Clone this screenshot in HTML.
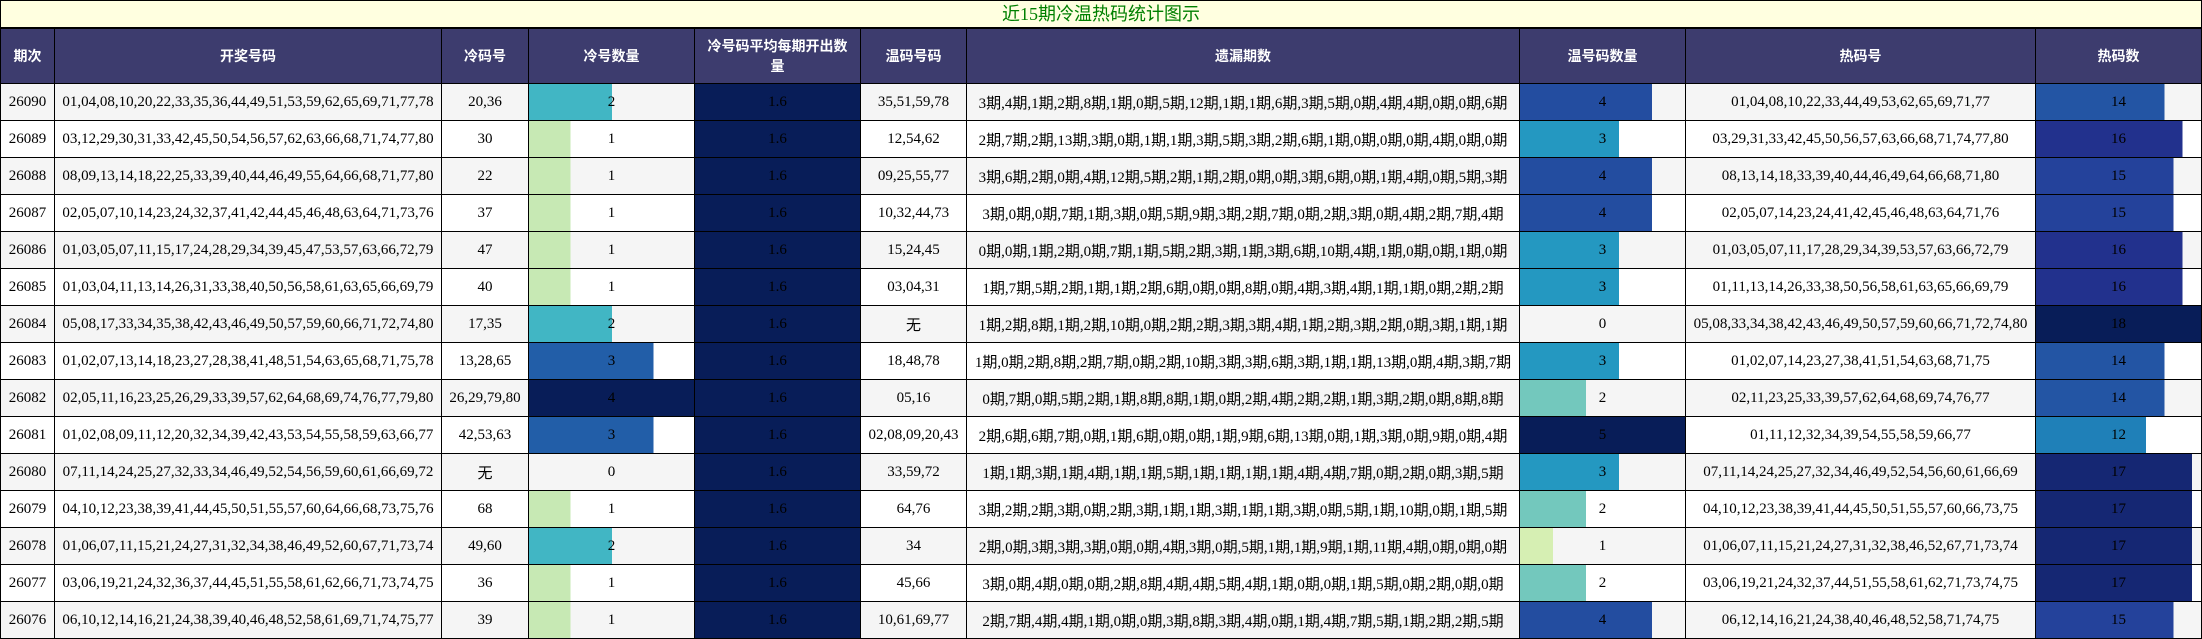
<!DOCTYPE html>
<html lang="zh">
<head>
<meta charset="utf-8">
<title>近15期冷温热码统计图示</title>
<style>
html,body{margin:0;padding:0;background:#fff;width:2202px;height:639px;overflow:hidden}
table{border-collapse:separate;border-spacing:0;table-layout:fixed;width:2202px;font-family:"Liberation Serif","Noto Sans CJK SC",serif;font-size:15px;color:#000;position:absolute;left:0;top:0}
td,th{box-sizing:border-box;border:0 solid #000;border-right-width:1px;border-bottom-width:1px;padding:0 8px;text-align:center;vertical-align:middle;overflow:hidden;background-origin:border-box}
td:first-child,th:first-child{border-left-width:1px}
td:nth-child(8),td:nth-child(10){background-origin:padding-box}
.t{height:29px;background:#ffffe0;color:#008000;font-size:18px;font-weight:normal;border-top-width:1px;border-bottom-width:2px;line-height:20px;padding:0}
thead tr.h th{height:55px;background:#3d3c6e;color:#fff;font-size:14px;font-weight:bold;line-height:20px;font-family:"Liberation Sans","Noto Sans CJK SC",sans-serif}
tbody td{height:37px;white-space:nowrap;padding:0 2px}
tbody tr:nth-child(odd){background:#f5f5f5}
tbody tr:nth-child(even){background:#fff}
.a{background:#081d58}
</style>
</head>
<body>
<table>
<colgroup>
<col style="width:55px"><col style="width:387px"><col style="width:87px"><col style="width:166px"><col style="width:166px"><col style="width:106px"><col style="width:553px"><col style="width:166px"><col style="width:350px"><col style="width:166px">
</colgroup>
<thead>
<tr><th class="t" colspan="10">近15期冷温热码统计图示</th></tr>
<tr class="h"><th>期次</th><th>开奖号码</th><th>冷码号</th><th>冷号数量</th><th>冷号码平均每期开出数量</th><th>温码号码</th><th>遗漏期数</th><th>温号码数量</th><th>热码号</th><th>热码数</th></tr>
</thead>
<tbody>
<tr><td>26090</td><td>01,04,08,10,20,22,33,35,36,44,49,51,53,59,62,65,69,71,77,78</td><td>20,36</td><td style="background-image:linear-gradient(90deg,#41b6c4 50%,transparent 50%)">2</td><td class="a">1.6</td><td>35,51,59,78</td><td>3期,4期,1期,2期,8期,1期,0期,5期,12期,1期,1期,6期,3期,5期,0期,4期,4期,0期,0期,6期</td><td style="background-image:linear-gradient(90deg,#234da0 80%,transparent 80%)">4</td><td>01,04,08,10,22,33,44,49,53,62,65,69,71,77</td><td style="background-image:linear-gradient(90deg,#2355a4 77.78%,transparent 77.78%)">14</td></tr>
<tr><td>26089</td><td>03,12,29,30,31,33,42,45,50,54,56,57,62,63,66,68,71,74,77,80</td><td>30</td><td style="background-image:linear-gradient(90deg,#c7e9b4 25%,transparent 25%)">1</td><td class="a">1.6</td><td>12,54,62</td><td>2期,7期,2期,13期,3期,0期,1期,1期,3期,5期,3期,2期,6期,1期,0期,0期,0期,4期,0期,0期</td><td style="background-image:linear-gradient(90deg,#2498c1 60%,transparent 60%)">3</td><td>03,29,31,33,42,45,50,56,57,63,66,68,71,74,77,80</td><td style="background-image:linear-gradient(90deg,#22318d 88.89%,transparent 88.89%)">16</td></tr>
<tr><td>26088</td><td>08,09,13,14,18,22,25,33,39,40,44,46,49,55,64,66,68,71,77,80</td><td>22</td><td style="background-image:linear-gradient(90deg,#c7e9b4 25%,transparent 25%)">1</td><td class="a">1.6</td><td>09,25,55,77</td><td>3期,6期,2期,0期,4期,12期,5期,2期,1期,2期,0期,0期,3期,6期,0期,1期,4期,0期,5期,3期</td><td style="background-image:linear-gradient(90deg,#234da0 80%,transparent 80%)">4</td><td>08,13,14,18,33,39,40,44,46,49,64,66,68,71,80</td><td style="background-image:linear-gradient(90deg,#24429b 83.33%,transparent 83.33%)">15</td></tr>
<tr><td>26087</td><td>02,05,07,10,14,23,24,32,37,41,42,44,45,46,48,63,64,71,73,76</td><td>37</td><td style="background-image:linear-gradient(90deg,#c7e9b4 25%,transparent 25%)">1</td><td class="a">1.6</td><td>10,32,44,73</td><td>3期,0期,0期,7期,1期,3期,0期,5期,9期,3期,2期,7期,0期,2期,3期,0期,4期,2期,7期,4期</td><td style="background-image:linear-gradient(90deg,#234da0 80%,transparent 80%)">4</td><td>02,05,07,14,23,24,41,42,45,46,48,63,64,71,76</td><td style="background-image:linear-gradient(90deg,#24429b 83.33%,transparent 83.33%)">15</td></tr>
<tr><td>26086</td><td>01,03,05,07,11,15,17,24,28,29,34,39,45,47,53,57,63,66,72,79</td><td>47</td><td style="background-image:linear-gradient(90deg,#c7e9b4 25%,transparent 25%)">1</td><td class="a">1.6</td><td>15,24,45</td><td>0期,0期,1期,2期,0期,7期,1期,5期,2期,3期,1期,3期,6期,10期,4期,1期,0期,0期,1期,0期</td><td style="background-image:linear-gradient(90deg,#2498c1 60%,transparent 60%)">3</td><td>01,03,05,07,11,17,28,29,34,39,53,57,63,66,72,79</td><td style="background-image:linear-gradient(90deg,#22318d 88.89%,transparent 88.89%)">16</td></tr>
<tr><td>26085</td><td>01,03,04,11,13,14,26,31,33,38,40,50,56,58,61,63,65,66,69,79</td><td>40</td><td style="background-image:linear-gradient(90deg,#c7e9b4 25%,transparent 25%)">1</td><td class="a">1.6</td><td>03,04,31</td><td>1期,7期,5期,2期,1期,1期,2期,6期,0期,0期,8期,0期,4期,3期,4期,1期,1期,0期,2期,2期</td><td style="background-image:linear-gradient(90deg,#2498c1 60%,transparent 60%)">3</td><td>01,11,13,14,26,33,38,50,56,58,61,63,65,66,69,79</td><td style="background-image:linear-gradient(90deg,#22318d 88.89%,transparent 88.89%)">16</td></tr>
<tr><td>26084</td><td>05,08,17,33,34,35,38,42,43,46,49,50,57,59,60,66,71,72,74,80</td><td>17,35</td><td style="background-image:linear-gradient(90deg,#41b6c4 50%,transparent 50%)">2</td><td class="a">1.6</td><td>无</td><td>1期,2期,8期,1期,2期,10期,0期,2期,2期,3期,3期,4期,1期,2期,3期,2期,0期,3期,1期,1期</td><td>0</td><td>05,08,33,34,38,42,43,46,49,50,57,59,60,66,71,72,74,80</td><td class="a">18</td></tr>
<tr><td>26083</td><td>01,02,07,13,14,18,23,27,28,38,41,48,51,54,63,65,68,71,75,78</td><td>13,28,65</td><td style="background-image:linear-gradient(90deg,#225ea8 75%,transparent 75%)">3</td><td class="a">1.6</td><td>18,48,78</td><td>1期,0期,2期,8期,2期,7期,0期,2期,10期,3期,3期,6期,3期,1期,1期,13期,0期,4期,3期,7期</td><td style="background-image:linear-gradient(90deg,#2498c1 60%,transparent 60%)">3</td><td>01,02,07,14,23,27,38,41,51,54,63,68,71,75</td><td style="background-image:linear-gradient(90deg,#2355a4 77.78%,transparent 77.78%)">14</td></tr>
<tr><td>26082</td><td>02,05,11,16,23,25,26,29,33,39,57,62,64,68,69,74,76,77,79,80</td><td>26,29,79,80</td><td class="a">4</td><td class="a">1.6</td><td>05,16</td><td>0期,7期,0期,5期,2期,1期,8期,8期,1期,0期,2期,4期,2期,2期,1期,3期,2期,0期,8期,8期</td><td style="background-image:linear-gradient(90deg,#73c8bd 40%,transparent 40%)">2</td><td>02,11,23,25,33,39,57,62,64,68,69,74,76,77</td><td style="background-image:linear-gradient(90deg,#2355a4 77.78%,transparent 77.78%)">14</td></tr>
<tr><td>26081</td><td>01,02,08,09,11,12,20,32,34,39,42,43,53,54,55,58,59,63,66,77</td><td>42,53,63</td><td style="background-image:linear-gradient(90deg,#225ea8 75%,transparent 75%)">3</td><td class="a">1.6</td><td>02,08,09,20,43</td><td>2期,6期,6期,7期,0期,1期,6期,0期,0期,1期,9期,6期,13期,0期,1期,3期,0期,9期,0期,4期</td><td class="a">5</td><td>01,11,12,32,34,39,54,55,58,59,66,77</td><td style="background-image:linear-gradient(90deg,#1f80b8 66.67%,transparent 66.67%)">12</td></tr>
<tr><td>26080</td><td>07,11,14,24,25,27,32,33,34,46,49,52,54,56,59,60,61,66,69,72</td><td>无</td><td>0</td><td class="a">1.6</td><td>33,59,72</td><td>1期,1期,3期,1期,4期,1期,1期,5期,1期,1期,1期,1期,4期,4期,7期,0期,2期,0期,3期,5期</td><td style="background-image:linear-gradient(90deg,#2498c1 60%,transparent 60%)">3</td><td>07,11,14,24,25,27,32,34,46,49,52,54,56,60,61,66,69</td><td style="background-image:linear-gradient(90deg,#152773 94.44%,transparent 94.44%)">17</td></tr>
<tr><td>26079</td><td>04,10,12,23,38,39,41,44,45,50,51,55,57,60,64,66,68,73,75,76</td><td>68</td><td style="background-image:linear-gradient(90deg,#c7e9b4 25%,transparent 25%)">1</td><td class="a">1.6</td><td>64,76</td><td>3期,2期,2期,3期,0期,2期,3期,1期,1期,3期,1期,1期,3期,0期,5期,1期,10期,0期,1期,5期</td><td style="background-image:linear-gradient(90deg,#73c8bd 40%,transparent 40%)">2</td><td>04,10,12,23,38,39,41,44,45,50,51,55,57,60,66,73,75</td><td style="background-image:linear-gradient(90deg,#152773 94.44%,transparent 94.44%)">17</td></tr>
<tr><td>26078</td><td>01,06,07,11,15,21,24,27,31,32,34,38,46,49,52,60,67,71,73,74</td><td>49,60</td><td style="background-image:linear-gradient(90deg,#41b6c4 50%,transparent 50%)">2</td><td class="a">1.6</td><td>34</td><td>2期,0期,3期,3期,3期,0期,0期,4期,3期,0期,5期,1期,1期,9期,1期,11期,4期,0期,0期,0期</td><td style="background-image:linear-gradient(90deg,#d6efb3 20%,transparent 20%)">1</td><td>01,06,07,11,15,21,24,27,31,32,38,46,52,67,71,73,74</td><td style="background-image:linear-gradient(90deg,#152773 94.44%,transparent 94.44%)">17</td></tr>
<tr><td>26077</td><td>03,06,19,21,24,32,36,37,44,45,51,55,58,61,62,66,71,73,74,75</td><td>36</td><td style="background-image:linear-gradient(90deg,#c7e9b4 25%,transparent 25%)">1</td><td class="a">1.6</td><td>45,66</td><td>3期,0期,4期,0期,0期,2期,8期,4期,4期,5期,4期,1期,0期,0期,1期,5期,0期,2期,0期,0期</td><td style="background-image:linear-gradient(90deg,#73c8bd 40%,transparent 40%)">2</td><td>03,06,19,21,24,32,37,44,51,55,58,61,62,71,73,74,75</td><td style="background-image:linear-gradient(90deg,#152773 94.44%,transparent 94.44%)">17</td></tr>
<tr><td>26076</td><td>06,10,12,14,16,21,24,38,39,40,46,48,52,58,61,69,71,74,75,77</td><td>39</td><td style="background-image:linear-gradient(90deg,#c7e9b4 25%,transparent 25%)">1</td><td class="a">1.6</td><td>10,61,69,77</td><td>2期,7期,4期,4期,1期,0期,0期,3期,8期,3期,4期,0期,1期,4期,7期,5期,1期,2期,2期,5期</td><td style="background-image:linear-gradient(90deg,#234da0 80%,transparent 80%)">4</td><td>06,12,14,16,21,24,38,40,46,48,52,58,71,74,75</td><td style="background-image:linear-gradient(90deg,#24429b 83.33%,transparent 83.33%)">15</td></tr>
</tbody>
</table>
</body>
</html>
